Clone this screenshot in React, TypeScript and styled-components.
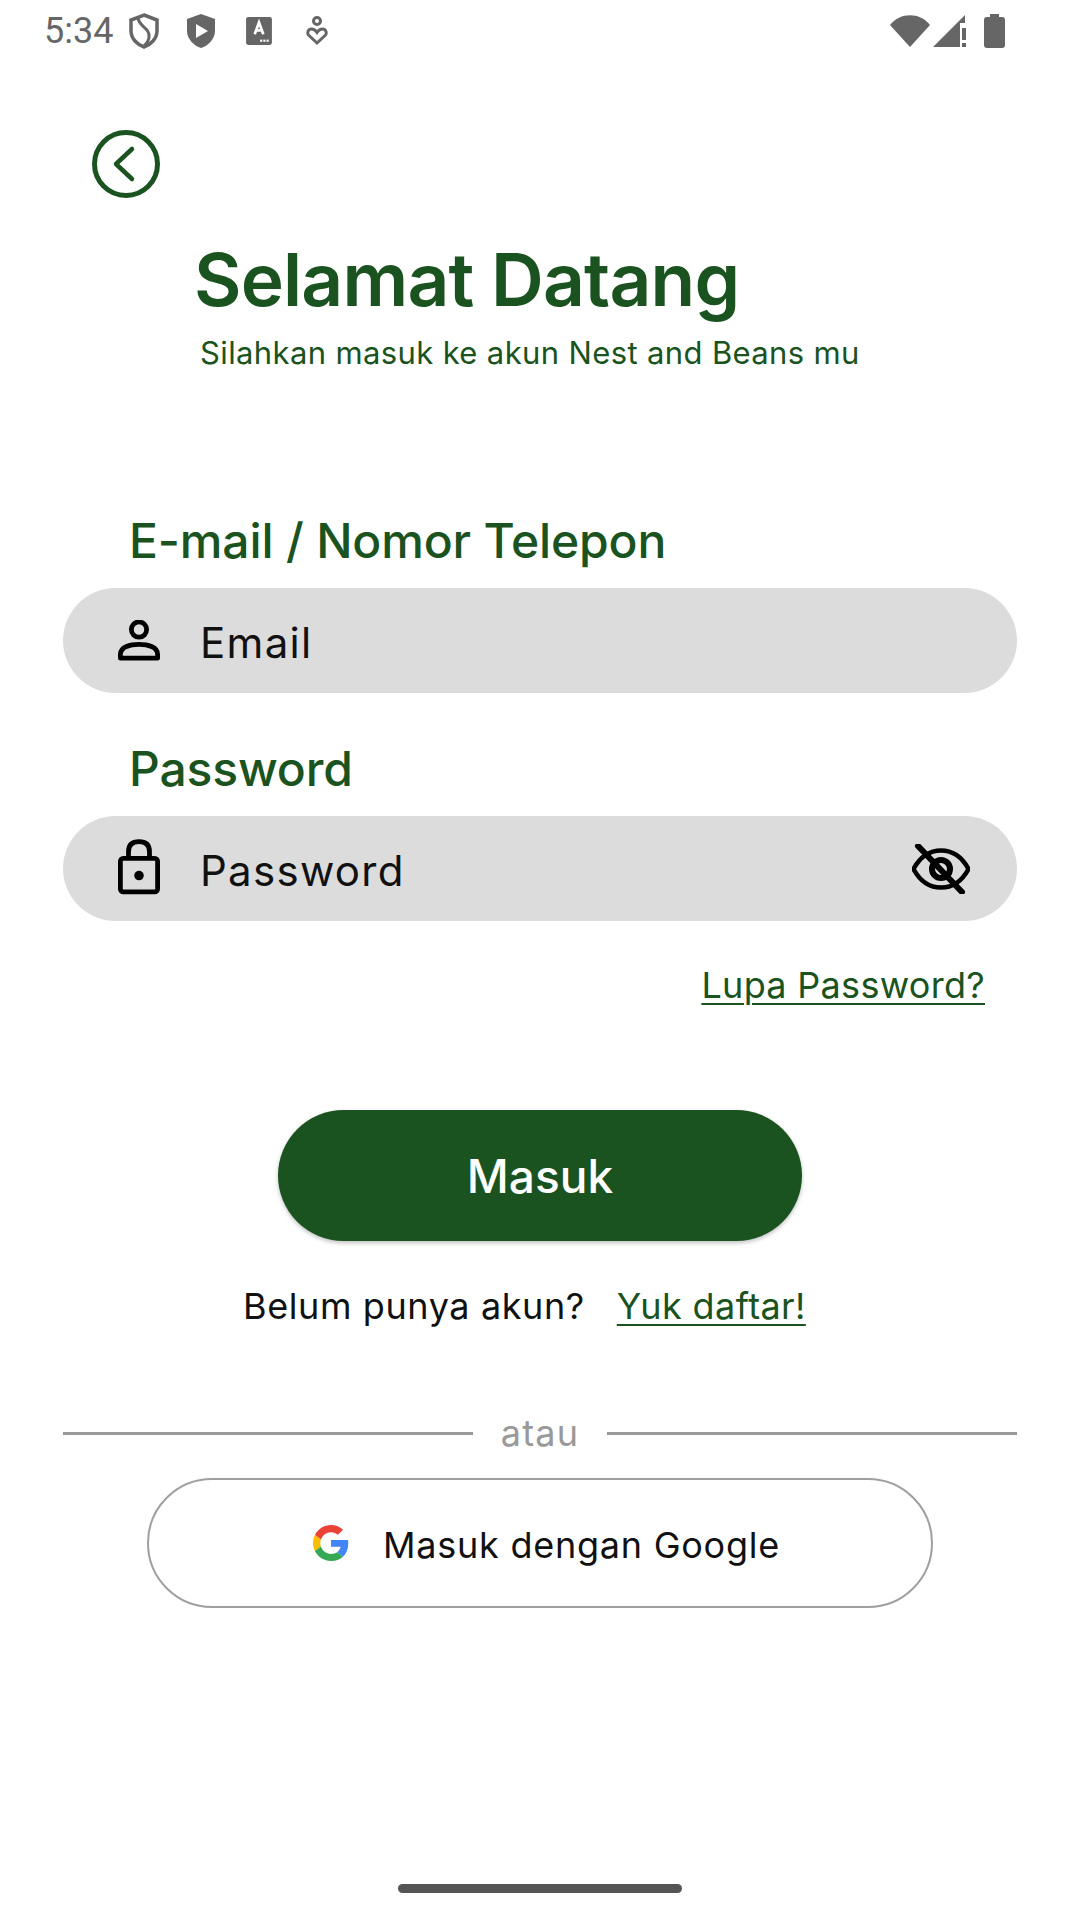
import styled, { createGlobalStyle } from "styled-components";

const green = "#1a5320";
const font = `"Inter", "Liberation Sans", sans-serif`;

const GlobalStyle = createGlobalStyle`
  html, body {
    margin: 0;
    padding: 0;
    background: #fff;
  }
`;

const Screen = styled.div`
  width: 1080px;
  height: 1920px;
  background: #fff;
  font-family: ${font};
  display: flex;
  flex-direction: column;
  overflow: hidden;
`;

//status bar
const StatusBar = styled.div`
  height: 62px;
  display: flex;
  align-items: center;
  padding: 0 75px 0 45px;
  color: #666;
`;

const Time = styled.span`
  font-family: "Roboto", sans-serif;
  font-size: 36px;
  width: 83px;
  margin-left: -1px;
  line-height: 62px;
`;

const StatusIcons = styled.div`
  display: flex;
  align-items: center;
  gap: ${(p: { $gap: number }) => p.$gap}px;
`;

const Spacer = styled.div`
  flex: 1;
`;

//header
const BackButton = styled.button`
  width: 68px;
  height: 68px;
  margin: 68px 0 0 92px;
  padding: 0;
  border: none;
  background: none;
  display: block;
`;

const Title = styled.h1`
  margin: 39px 0 0 194px;
  font-size: 73px;
  line-height: 86px;
  font-weight: 600;
  letter-spacing: -0.8px;
  color: ${green};
`;

const Subtitle = styled.p`
  margin: 10px 0 0 200px;
  font-size: 31px;
  line-height: 40px;
  font-weight: 400;
  letter-spacing: 0.37px;
  color: ${green};
`;

//form
const Form = styled.form`
  margin: 139px 63px 0;
  display: flex;
  flex-direction: column;
`;

const Label = styled.label`
  margin: 0 0 18px 66px;
  font-size: 48px;
  line-height: 58px;
  font-weight: 500;
  letter-spacing: -0.15px;
  color: ${green};
`;

const Field = styled.div`
  height: 105px;
  border-radius: 53px;
  background: #dcdcdc;
  display: flex;
  align-items: center;
  padding: 0 47px 0 55px;
  margin-bottom: 47px;
`;

const LockIcon = styled.svg`
  margin-top: -3px;
`;

const FieldText = styled.span`
  margin: 3px 0 0 40px;
  flex: 1;
  font-size: 42px;
  letter-spacing: 1.3px;
  color: #111;
`;

const ForgotLink = styled.a`
  align-self: flex-end;
  margin: -6px 32px 0 0;
  font-size: 36px;
  line-height: 46px;
  letter-spacing: 0.3px;
  color: ${green};
  text-decoration: underline;
  text-decoration-thickness: 2px;
  text-underline-offset: 5px;
`;

const SubmitButton = styled.button`
  align-self: center;
  margin-top: 102px;
  width: 524px;
  height: 131px;
  border: none;
  border-radius: 66px;
  background: ${green};
  color: #fff;
  font-family: ${font};
  font-size: 46px;
  font-weight: 500;
  box-shadow: 0 2px 4px rgba(0, 0, 0, 0.25);
`;

const SignupRow = styled.div`
  margin-top: 42px;
  padding-left: 180px;
  display: flex;
  gap: 32px;
  font-size: 36px;
  line-height: 46px;
  letter-spacing: 0.6px;
  color: #111;
`;

const SignupLink = styled.a`
  color: ${green};
  letter-spacing: 0.4px;
  text-decoration: underline;
  text-decoration-thickness: 2px;
  text-underline-offset: 5px;
`;

const DividerRow = styled.div`
  margin-top: 81px;
  display: flex;
  align-items: center;
  gap: 28px;
`;

const DividerLine = styled.div`
  flex: 1;
  height: 3px;
  background: #9a9a9a;
`;

const DividerText = styled.span`
  font-size: 36px;
  line-height: 46px;
  letter-spacing: 1.2px;
  color: #999;
`;

const GoogleButton = styled.div`
  align-self: center;
  margin-top: 22px;
  width: 786px;
  height: 130px;
  box-sizing: border-box;
  border: 2.5px solid #9f9f9f;
  border-radius: 65px;
  display: flex;
  align-items: center;
  padding-left: 164px;
  gap: 34px;
  font-size: 36px;
  letter-spacing: 0.75px;
  color: #111;
`;

const GoogleText = styled.span`
  margin-top: 3px;
`;

const HomeBar = styled.div`
  align-self: center;
  width: 284px;
  height: 9px;
  margin-top: auto;
  margin-bottom: 27px;
  border-radius: 5px;
  background: #555;
`;

export default function App() {
  return (
    <Screen>
      <GlobalStyle />
      <StatusBar>
        <Time>5:34</Time>
        <StatusIcons $gap={25}>
          <svg width="34" height="36" viewBox="0 0 30 36" fill="none" stroke="#666" strokeWidth="3.5">
            <path d="M15 2 L28 7 V18 C28 26 21 32 15 34 C9 32 2 26 2 18 V7 Z" />
            <path d="M9 4 C9 14 21 14 20 24 C20 28 17 31 15 33" strokeWidth="3" />
          </svg>
          <svg width="30" height="36" viewBox="0 0 30 36" fill="#666">
            <path d="M15 1 L29 6 V18 C29 26 22 33 15 35 C8 33 1 26 1 18 V6 Z" />
            <path d="M10 11 L22 18 L10 25 Z" fill="#fff" />
          </svg>
          <svg style={{ marginLeft: 5 }} width="26" height="28" viewBox="0 0 24 26">
            <rect width="24" height="26" rx="2" fill="#666" />
            <path d="M8 16 L12 5 L16 16 M9.5 12.5 H14.5" stroke="#fff" strokeWidth="2.5" fill="none" />
            <rect x="13" y="21" width="2" height="2" fill="#fff" />
            <rect x="16" y="21" width="2" height="2" fill="#fff" />
            <rect x="19" y="21" width="2" height="2" fill="#fff" />
          </svg>
          <svg style={{ marginLeft: 9 }} width="22" height="30" viewBox="0 0 22 30" fill="none" stroke="#666" strokeWidth="3">
            <circle cx="11" cy="5" r="3.5" />
            <path d="M11 27 L2.5 19 C1 17 2 13 5.5 13 C8 13 10 15 11 16.5 C12 15 14 13 16.5 13 C20 13 21 17 19.5 19 Z" />
          </svg>
        </StatusIcons>
        <Spacer />
        <StatusIcons $gap={3}>
          <svg width="40" height="32" viewBox="0 0 40 32" fill="#666">
            <path d="M0 10 C10 -3 30 -3 40 10 L20 32 Z" />
          </svg>
          <svg width="34" height="32" viewBox="0 0 34 32" fill="#666">
            <path d="M0 32 L32 0 V8 L27 8 V32 Z" />
            <rect x="29" y="13" width="4" height="12" />
            <rect x="29" y="28" width="4" height="4" />
          </svg>
          <svg style={{ marginLeft: 14 }} width="21" height="34" viewBox="0 0 21 34" fill="#666">
            <path d="M6 0 H15 V3 H18 C20 3 21 4 21 6 V31 C21 33 20 34 18 34 H3 C1 34 0 33 0 31 V6 C0 4 1 3 3 3 H6 Z" />
          </svg>
        </StatusIcons>
      </StatusBar>

      <BackButton aria-label="back">
        <svg width="68" height="68" viewBox="0 0 68 68" fill="none" stroke={green}>
          <circle cx="34" cy="34" r="31.5" strokeWidth="5" />
          <path d="M40 19 L24 34 L40 49" strokeWidth="4.5" strokeLinecap="round" strokeLinejoin="round" />
        </svg>
      </BackButton>
      <Title>Selamat Datang</Title>
      <Subtitle>Silahkan masuk ke akun Nest and Beans mu</Subtitle>

      <Form>
        <Label>E-mail / Nomor Telepon</Label>
        <Field>
          <svg width="42" height="42" viewBox="0 0 44 44" fill="none" stroke="#000" strokeWidth="5">
            <circle cx="22" cy="10" r="8" />
            <path d="M2.5 40 V36 C2.5 28 13 25.5 22 25.5 C31 25.5 41.5 28 41.5 36 V40 Z" strokeLinejoin="round" />
          </svg>
          <FieldText>Email</FieldText>
        </Field>
        <Label>Password</Label>
        <Field>
          <LockIcon width="42" height="56" viewBox="0 0 44 58" fill="none" stroke="#000" strokeWidth="5">
            <path d="M11 20 V13 C11 5 16 2.5 22 2.5 C28 2.5 33 5 33 13 V20" />
            <rect x="2.5" y="20" width="39" height="35" rx="3" />
            <circle cx="22" cy="38" r="5" fill="#000" stroke="none" />
          </LockIcon>
          <FieldText>Password</FieldText>
          <svg width="58" height="50" viewBox="0 0 58 50" fill="none" stroke="#000" strokeWidth="4.5">
            <path d="M1.500 25 C8 13 18 6.500 29 6.500 C40 6.500 50 13 56.500 25 C50 37 40 43.500 29 43.500 C18 43.500 8 37 1.500 25 Z" strokeLinejoin="round" />
            <circle cx="29" cy="25" r="9" strokeWidth="6" />
            <path d="M6 2 L50 48" strokeWidth="6" strokeLinecap="round" />
          </svg>
        </Field>
        <ForgotLink>Lupa Password?</ForgotLink>
        <SubmitButton type="button">Masuk</SubmitButton>
        <SignupRow>
          <span>Belum punya akun?</span>
          <SignupLink>Yuk daftar!</SignupLink>
        </SignupRow>
        <DividerRow>
          <DividerLine />
          <DividerText>atau</DividerText>
          <DividerLine />
        </DividerRow>
        <GoogleButton>
          <svg width="36" height="36" viewBox="0 0 48 48">
            <path fill="#EA4335" d="M24 9.500c3.500 0 6.700 1.200 9.200 3.600l6.900-6.900C35.900 2.400 30.500 0 24 0 14.600 0 6.500 5.400 2.600 13.200l8 6.200C12.400 13.700 17.700 9.500 24 9.500z" />
            <path fill="#4285F4" d="M47 24.500c0-1.600-.1-3.100-.4-4.500H24v9h12.900c-.6 3-2.200 5.500-4.700 7.200l7.700 6C44.400 38 47 31.800 47 24.500z" />
            <path fill="#FBBC05" d="M10.500 28.600c-.5-1.400-.8-3-.8-4.600s.3-3.200.8-4.600l-8-6.200C.9 16.500 0 20.100 0 24s.9 7.500 2.600 10.800l7.900-6.200z" />
            <path fill="#34A853" d="M24 48c6.500 0 11.900-2.100 15.900-5.800l-7.700-6c-2.200 1.500-4.900 2.300-8.200 2.300-6.300 0-11.600-4.200-13.500-9.900l-8 6.200C6.500 42.600 14.600 48 24 48z" />
          </svg>
          <GoogleText>Masuk dengan Google</GoogleText>
        </GoogleButton>
      </Form>
      <HomeBar />
    </Screen>
  );
}
